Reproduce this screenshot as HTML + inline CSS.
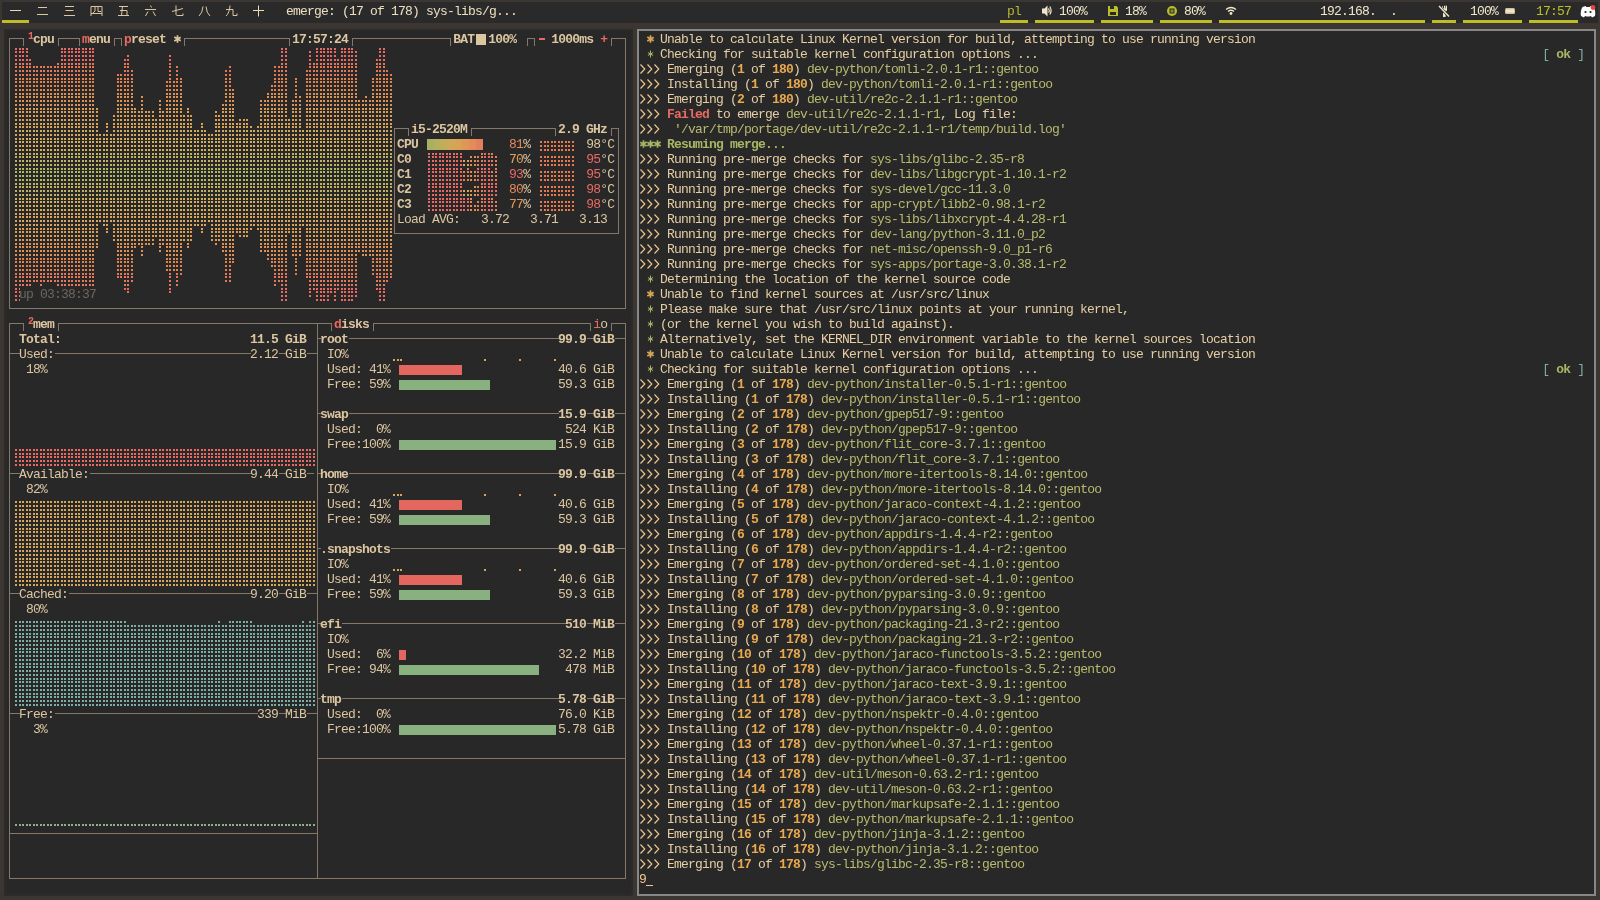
<!DOCTYPE html><html><head><meta charset="utf-8"><style>
html,body{margin:0;padding:0}body{width:1600px;height:900px;background:#3b3632;overflow:hidden;position:relative}
.t{position:absolute;font-family:"Liberation Mono",monospace;font-size:13px;line-height:15px;letter-spacing:-0.8px;white-space:pre;color:#dcc6a0}
#tx{position:absolute;left:0;top:0;width:1600px;height:900px;will-change:transform}.b{font-weight:bold}.w{position:absolute}svg{position:absolute;left:0;top:0}
.sup{font-size:10px;vertical-align:top}
</style></head><body>
<div class="w" style="left:4px;top:29px;width:625px;height:863px;border:2px solid #2d2b29;background:#282828"></div>
<div class="w" style="left:637px;top:29px;width:955px;height:863px;border:2px solid #878787;background:#282828"></div>
<svg width="1600" height="900" viewBox="0 0 1600 900"><defs><pattern id="pa" patternUnits="userSpaceOnUse" x="14" y="31" width="7" height="15"><path fill="#fff" d="M1 2h2v2h-2zM1 5h2v2h-2zM1 9h2v2h-2zM1 13h2v2h-2z"/></pattern><pattern id="pb" patternUnits="userSpaceOnUse" x="14" y="31" width="7" height="15"><path fill="#fff" d="M5 2h2v2h-2zM5 5h2v2h-2zM5 9h2v2h-2zM5 13h2v2h-2z"/></pattern><mask id="mcpu" maskUnits="userSpaceOnUse" x="0" y="0" width="1600" height="900"><rect x="15" y="48" width="2" height="253" fill="url(#pa)"/><rect x="19" y="48" width="2" height="253" fill="url(#pb)"/><rect x="22" y="48" width="2" height="253" fill="url(#pa)"/><rect x="26" y="48" width="2" height="253" fill="url(#pb)"/><rect x="29" y="59" width="2" height="242" fill="url(#pa)"/><rect x="33" y="66" width="2" height="216" fill="url(#pb)"/><rect x="36" y="66" width="2" height="216" fill="url(#pa)"/><rect x="40" y="66" width="2" height="235" fill="url(#pb)"/><rect x="43" y="66" width="2" height="216" fill="url(#pa)"/><rect x="47" y="66" width="2" height="216" fill="url(#pb)"/><rect x="50" y="66" width="2" height="216" fill="url(#pa)"/><rect x="54" y="66" width="2" height="216" fill="url(#pb)"/><rect x="57" y="63" width="2" height="238" fill="url(#pa)"/><rect x="61" y="48" width="2" height="253" fill="url(#pb)"/><rect x="64" y="48" width="2" height="253" fill="url(#pa)"/><rect x="68" y="48" width="2" height="253" fill="url(#pb)"/><rect x="71" y="48" width="2" height="253" fill="url(#pa)"/><rect x="75" y="48" width="2" height="253" fill="url(#pb)"/><rect x="78" y="48" width="2" height="253" fill="url(#pa)"/><rect x="82" y="48" width="2" height="253" fill="url(#pb)"/><rect x="85" y="48" width="2" height="253" fill="url(#pa)"/><rect x="89" y="48" width="2" height="253" fill="url(#pb)"/><rect x="92" y="48" width="2" height="253" fill="url(#pa)"/><rect x="96" y="108" width="2" height="140" fill="url(#pb)"/><rect x="99" y="134" width="2" height="88" fill="url(#pa)"/><rect x="103" y="134" width="2" height="92" fill="url(#pb)"/><rect x="106" y="123" width="2" height="110" fill="url(#pa)"/><rect x="110" y="134" width="2" height="88" fill="url(#pb)"/><rect x="113" y="115" width="2" height="126" fill="url(#pa)"/><rect x="117" y="74" width="2" height="204" fill="url(#pb)"/><rect x="120" y="74" width="2" height="204" fill="url(#pa)"/><rect x="124" y="59" width="2" height="231" fill="url(#pb)"/><rect x="127" y="55" width="2" height="238" fill="url(#pa)"/><rect x="131" y="70" width="2" height="212" fill="url(#pb)"/><rect x="134" y="108" width="2" height="140" fill="url(#pa)"/><rect x="138" y="111" width="2" height="134" fill="url(#pb)"/><rect x="141" y="96" width="2" height="160" fill="url(#pa)"/><rect x="145" y="111" width="2" height="134" fill="url(#pb)"/><rect x="148" y="111" width="2" height="134" fill="url(#pa)"/><rect x="152" y="111" width="2" height="134" fill="url(#pb)"/><rect x="155" y="119" width="2" height="118" fill="url(#pa)"/><rect x="159" y="100" width="2" height="152" fill="url(#pb)"/><rect x="162" y="111" width="2" height="134" fill="url(#pa)"/><rect x="166" y="81" width="2" height="190" fill="url(#pb)"/><rect x="169" y="55" width="2" height="238" fill="url(#pa)"/><rect x="173" y="81" width="2" height="190" fill="url(#pb)"/><rect x="176" y="66" width="2" height="220" fill="url(#pa)"/><rect x="180" y="78" width="2" height="197" fill="url(#pb)"/><rect x="183" y="115" width="2" height="126" fill="url(#pa)"/><rect x="187" y="108" width="2" height="140" fill="url(#pb)"/><rect x="190" y="115" width="2" height="126" fill="url(#pa)"/><rect x="194" y="130" width="2" height="96" fill="url(#pb)"/><rect x="197" y="130" width="2" height="96" fill="url(#pa)"/><rect x="201" y="123" width="2" height="110" fill="url(#pb)"/><rect x="204" y="130" width="2" height="96" fill="url(#pa)"/><rect x="208" y="134" width="2" height="88" fill="url(#pb)"/><rect x="211" y="134" width="2" height="107" fill="url(#pa)"/><rect x="215" y="111" width="2" height="134" fill="url(#pb)"/><rect x="218" y="115" width="2" height="126" fill="url(#pa)"/><rect x="222" y="104" width="2" height="148" fill="url(#pb)"/><rect x="225" y="70" width="2" height="212" fill="url(#pa)"/><rect x="229" y="66" width="2" height="216" fill="url(#pb)"/><rect x="232" y="89" width="2" height="174" fill="url(#pa)"/><rect x="236" y="123" width="2" height="110" fill="url(#pb)"/><rect x="239" y="119" width="2" height="118" fill="url(#pa)"/><rect x="243" y="119" width="2" height="118" fill="url(#pb)"/><rect x="246" y="119" width="2" height="118" fill="url(#pa)"/><rect x="250" y="126" width="2" height="104" fill="url(#pb)"/><rect x="253" y="130" width="2" height="96" fill="url(#pa)"/><rect x="257" y="126" width="2" height="104" fill="url(#pb)"/><rect x="260" y="100" width="2" height="152" fill="url(#pa)"/><rect x="264" y="100" width="2" height="152" fill="url(#pb)"/><rect x="267" y="93" width="2" height="167" fill="url(#pa)"/><rect x="271" y="85" width="2" height="182" fill="url(#pb)"/><rect x="274" y="66" width="2" height="220" fill="url(#pa)"/><rect x="278" y="66" width="2" height="216" fill="url(#pb)"/><rect x="281" y="48" width="2" height="253" fill="url(#pa)"/><rect x="285" y="48" width="2" height="253" fill="url(#pb)"/><rect x="288" y="119" width="2" height="114" fill="url(#pa)"/><rect x="292" y="100" width="2" height="156" fill="url(#pb)"/><rect x="295" y="78" width="2" height="197" fill="url(#pa)"/><rect x="299" y="96" width="2" height="160" fill="url(#pb)"/><rect x="302" y="130" width="2" height="96" fill="url(#pa)"/><rect x="306" y="70" width="2" height="208" fill="url(#pb)"/><rect x="309" y="51" width="2" height="246" fill="url(#pa)"/><rect x="313" y="63" width="2" height="227" fill="url(#pb)"/><rect x="316" y="48" width="2" height="253" fill="url(#pa)"/><rect x="320" y="48" width="2" height="253" fill="url(#pb)"/><rect x="323" y="48" width="2" height="253" fill="url(#pa)"/><rect x="327" y="48" width="2" height="253" fill="url(#pb)"/><rect x="330" y="48" width="2" height="245" fill="url(#pa)"/><rect x="334" y="48" width="2" height="253" fill="url(#pb)"/><rect x="337" y="59" width="2" height="231" fill="url(#pa)"/><rect x="341" y="48" width="2" height="253" fill="url(#pb)"/><rect x="344" y="48" width="2" height="253" fill="url(#pa)"/><rect x="348" y="48" width="2" height="253" fill="url(#pb)"/><rect x="351" y="48" width="2" height="253" fill="url(#pa)"/><rect x="355" y="51" width="2" height="246" fill="url(#pb)"/><rect x="358" y="100" width="2" height="152" fill="url(#pa)"/><rect x="362" y="100" width="2" height="156" fill="url(#pb)"/><rect x="365" y="96" width="2" height="160" fill="url(#pa)"/><rect x="369" y="100" width="2" height="156" fill="url(#pb)"/><rect x="372" y="78" width="2" height="197" fill="url(#pa)"/><rect x="376" y="59" width="2" height="231" fill="url(#pb)"/><rect x="379" y="48" width="2" height="253" fill="url(#pa)"/><rect x="383" y="48" width="2" height="253" fill="url(#pb)"/><rect x="386" y="70" width="2" height="212" fill="url(#pa)"/><rect x="390" y="74" width="2" height="204" fill="url(#pb)"/></mask><mask id="mdots" maskUnits="userSpaceOnUse" x="0" y="0" width="1600" height="900"><rect x="0" y="0" width="1600" height="900" fill="url(#pa)"/><rect x="0" y="0" width="1600" height="900" fill="url(#pb)"/></mask></defs><rect x="2" y="2" width="1596" height="21" fill="#2a2a2a"/><rect x="2" y="20" width="27" height="3" fill="#bdbd2c"/><rect x="1000" y="20" width="28" height="3" fill="#bdbd2c"/><rect x="1035" y="20" width="59" height="3" fill="#bdbd2c"/><rect x="1101" y="20" width="52" height="3" fill="#bdbd2c"/><rect x="1160" y="20" width="52" height="3" fill="#bdbd2c"/><rect x="1219" y="20" width="206" height="3" fill="#bdbd2c"/><rect x="1432" y="20" width="24" height="3" fill="#bdbd2c"/><rect x="1463" y="20" width="59" height="3" fill="#bdbd2c"/><rect x="1529" y="20" width="49" height="3" fill="#bdbd2c"/><path d="M10.0 10.5H21.0" stroke="#ebdbb2" stroke-width="1" fill="none"/><path d="M38.0 7.5H47.0 M37.0 14.5H48.0" stroke="#dcc6a0" stroke-width="1" fill="none"/><path d="M65.0 6.5H74.0 M65.5 10.5H73.5 M64.0 15.5H75.0" stroke="#dcc6a0" stroke-width="1" fill="none"/><path d="M91.0 16V6.5H102.0V16 M91.0 13.5H102.0 M95.0 6.5V11 L93.0 13 M98.0 6.5V11.5H101.0" stroke="#dcc6a0" stroke-width="1" fill="none"/><path d="M119.0 6.5H128.0 M122.5 6.5L121.5 15.5 M120.0 10.5H127.0V15.5 M118.0 15.5H129.0" stroke="#dcc6a0" stroke-width="1" fill="none"/><path d="M150.5 5.5L151.5 7.5 M145.0 9.5H156.0 M148.0 11.5L145.5 16 M153.0 11.5L155.5 16" stroke="#dcc6a0" stroke-width="1" fill="none"/><path d="M172.0 11.5L183.0 8.5 M176.0 5.5V14.5Q176.0 15.5 178.0 15.5H183.0V13.5" stroke="#dcc6a0" stroke-width="1" fill="none"/><path d="M203.0 6.5Q202.5 13 199.0 16 M206.0 6.5Q206.5 13 210.0 16" stroke="#dcc6a0" stroke-width="1" fill="none"/><path d="M226.0 9.5H233.0V15.5H237.0V13.5 M230.0 5.5Q229.5 13 226.0 16" stroke="#dcc6a0" stroke-width="1" fill="none"/><path d="M253.0 10.5H264.0 M258.5 5.5V16.5" stroke="#ebdbb2" stroke-width="1" fill="none"/><path d="M1042 8.5h2.5l3-3v11l-3-3H1042z" fill="#f0e6ca"/><path d="M1048.6 8.2q1.2 2.3 0 4.6M1049.8 6.5q2.6 4 0 8" stroke="#f0e6ca" stroke-width="1.2" fill="none"/><path d="M1108 6h8.5l1.5 1.5V16h-10z" fill="#bdbd2c"/><rect x="1110" y="6" width="4" height="3" fill="#2a2a2a"/><rect x="1110" y="12" width="6" height="3" fill="#2a2a2a"/><circle cx="1172" cy="11" r="5" fill="#bdbd2c"/><rect x="1169.5" y="8.5" width="5" height="5" fill="#2a2a2a"/><rect x="1170.5" y="9.5" width="3" height="3" fill="#8a8a30"/><path d="M1226 9.5q5-4 10 0M1228 11.5q3-2.5 6 0" stroke="#f0e6ca" stroke-width="1.3" fill="none"/><circle cx="1231" cy="13.5" r="1.4" fill="#f0e6ca"/><g fill="#f0e6ca"><rect x="1442" y="6" width="1" height="2.5" opacity="0.7"/><rect x="1444" y="5.7" width="1.4" height="3"/><rect x="1446" y="5.7" width="1" height="5"/><rect x="1441.5" y="8.3" width="5.5" height="2.4"/><rect x="1443" y="10.6" width="2.6" height="6.4"/></g><path d="M1438.5 5.8L1449.5 17" stroke="#2a2a2a" stroke-width="2.6"/><path d="M1439 6L1449 16.5" stroke="#f0e6ca" stroke-width="1.4"/><rect x="1505" y="8" width="10" height="6" rx="1.5" fill="#cfc2a0"/><rect x="1506" y="9.5" width="8" height="3" fill="#f0e6c8"/><path d="M1581 16q-1-5 1.5-9l3-1 .8 1h3.4l.8-1 3 1q2.5 4 1.5 9l-3 1.5-1-1.5q-2.5 1-6 0l-1 1.5z" fill="#fff"/><circle cx="1585.5" cy="12" r="1.1" fill="#222"/><circle cx="1590.5" cy="12" r="1.1" fill="#222"/><circle cx="1593" cy="7.5" r="2.4" fill="#e8413e"/><g mask="url(#mcpu)"><rect x="13" y="46" width="380" height="15" fill="#ea6962"/><rect x="13" y="61" width="380" height="15" fill="#e67658"/><rect x="13" y="76" width="380" height="15" fill="#e2834f"/><rect x="13" y="91" width="380" height="15" fill="#df9052"/><rect x="13" y="106" width="380" height="15" fill="#dc9e55"/><rect x="13" y="121" width="380" height="15" fill="#d8a658"/><rect x="13" y="136" width="380" height="15" fill="#d4ae5a"/><rect x="13" y="151" width="380" height="15" fill="#c4b35e"/><rect x="13" y="166" width="380" height="15" fill="#b4b862"/><rect x="13" y="181" width="380" height="15" fill="#c4b35e"/><rect x="13" y="196" width="380" height="15" fill="#d4ae5a"/><rect x="13" y="211" width="380" height="15" fill="#d8a658"/><rect x="13" y="226" width="380" height="15" fill="#dc9e55"/><rect x="13" y="241" width="380" height="15" fill="#df9052"/><rect x="13" y="256" width="380" height="15" fill="#e2834f"/><rect x="13" y="271" width="380" height="15" fill="#e67658"/><rect x="13" y="286" width="380" height="15" fill="#ea6962"/></g><rect x="20" y="286" width="77" height="15" fill="#282828"/><g mask="url(#mdots)"><rect x="15" y="449" width="300" height="17" fill="#ea6962"/><rect x="15" y="501" width="300" height="85" fill="#d8a657"/><rect x="15" y="625" width="300" height="81" fill="#7daea3"/><rect x="15" y="621" width="111" height="3" fill="#7daea3"/><rect x="218" y="621" width="2" height="3" fill="#7daea3"/><rect x="229" y="621" width="23" height="3" fill="#7daea3"/><rect x="302" y="621" width="2" height="3" fill="#7daea3"/><rect x="309" y="621" width="6" height="3" fill="#7daea3"/><rect x="15" y="824" width="300" height="2" fill="#89b482"/><rect x="393" y="359" width="2" height="2" fill="#d8a657"/><rect x="397" y="359" width="2" height="2" fill="#d8a657"/><rect x="400" y="359" width="2" height="2" fill="#d8a657"/><rect x="484" y="359" width="2" height="2" fill="#d8a657"/><rect x="519" y="359" width="2" height="2" fill="#d8a657"/><rect x="554" y="359" width="2" height="2" fill="#d8a657"/><rect x="393" y="494" width="2" height="2" fill="#d8a657"/><rect x="397" y="494" width="2" height="2" fill="#d8a657"/><rect x="400" y="494" width="2" height="2" fill="#d8a657"/><rect x="484" y="494" width="2" height="2" fill="#d8a657"/><rect x="519" y="494" width="2" height="2" fill="#d8a657"/><rect x="554" y="494" width="2" height="2" fill="#d8a657"/><rect x="393" y="569" width="2" height="2" fill="#d8a657"/><rect x="397" y="569" width="2" height="2" fill="#d8a657"/><rect x="400" y="569" width="2" height="2" fill="#d8a657"/><rect x="484" y="569" width="2" height="2" fill="#d8a657"/><rect x="519" y="569" width="2" height="2" fill="#d8a657"/><rect x="554" y="569" width="2" height="2" fill="#d8a657"/><rect x="428" y="153" width="2" height="13" fill="#ea6962"/><rect x="432" y="153" width="2" height="13" fill="#ea6962"/><rect x="435" y="153" width="2" height="13" fill="#ea6962"/><rect x="439" y="153" width="2" height="13" fill="#ea6962"/><rect x="442" y="153" width="2" height="13" fill="#ea6962"/><rect x="446" y="153" width="2" height="13" fill="#ea6962"/><rect x="449" y="153" width="2" height="13" fill="#ea6962"/><rect x="453" y="153" width="2" height="13" fill="#ea6962"/><rect x="456" y="153" width="2" height="13" fill="#ea6962"/><rect x="460" y="153" width="2" height="13" fill="#ea6962"/><rect x="463" y="160" width="2" height="6" fill="#d8a657"/><rect x="467" y="160" width="2" height="6" fill="#d8a657"/><rect x="470" y="156" width="2" height="10" fill="#e38c50"/><rect x="474" y="156" width="2" height="10" fill="#e38c50"/><rect x="477" y="156" width="2" height="10" fill="#e67c56"/><rect x="481" y="153" width="2" height="13" fill="#e67c56"/><rect x="484" y="153" width="2" height="13" fill="#ea6962"/><rect x="488" y="153" width="2" height="13" fill="#ea6962"/><rect x="491" y="153" width="2" height="13" fill="#e67c56"/><rect x="495" y="156" width="2" height="10" fill="#e67c56"/><rect x="428" y="168" width="2" height="13" fill="#ea6962"/><rect x="432" y="168" width="2" height="13" fill="#ea6962"/><rect x="435" y="168" width="2" height="13" fill="#ea6962"/><rect x="439" y="168" width="2" height="13" fill="#ea6962"/><rect x="442" y="168" width="2" height="13" fill="#ea6962"/><rect x="446" y="168" width="2" height="13" fill="#ea6962"/><rect x="449" y="168" width="2" height="13" fill="#ea6962"/><rect x="453" y="168" width="2" height="13" fill="#ea6962"/><rect x="456" y="168" width="2" height="13" fill="#ea6962"/><rect x="460" y="168" width="2" height="13" fill="#ea6962"/><rect x="463" y="171" width="2" height="10" fill="#e67c56"/><rect x="467" y="168" width="2" height="13" fill="#e67c56"/><rect x="470" y="171" width="2" height="10" fill="#e38c50"/><rect x="474" y="171" width="2" height="10" fill="#e38c50"/><rect x="477" y="168" width="2" height="13" fill="#ea6962"/><rect x="481" y="168" width="2" height="13" fill="#ea6962"/><rect x="484" y="168" width="2" height="13" fill="#ea6962"/><rect x="488" y="168" width="2" height="13" fill="#ea6962"/><rect x="491" y="171" width="2" height="10" fill="#e67c56"/><rect x="495" y="168" width="2" height="13" fill="#e67c56"/><rect x="428" y="183" width="2" height="13" fill="#ea6962"/><rect x="432" y="183" width="2" height="13" fill="#ea6962"/><rect x="435" y="183" width="2" height="13" fill="#ea6962"/><rect x="439" y="183" width="2" height="13" fill="#ea6962"/><rect x="442" y="183" width="2" height="13" fill="#ea6962"/><rect x="446" y="183" width="2" height="13" fill="#ea6962"/><rect x="449" y="183" width="2" height="13" fill="#ea6962"/><rect x="453" y="183" width="2" height="13" fill="#ea6962"/><rect x="456" y="183" width="2" height="13" fill="#ea6962"/><rect x="460" y="183" width="2" height="13" fill="#ea6962"/><rect x="463" y="190" width="2" height="6" fill="#d8a657"/><rect x="467" y="190" width="2" height="6" fill="#d8a657"/><rect x="470" y="190" width="2" height="6" fill="#de9954"/><rect x="474" y="186" width="2" height="10" fill="#de9954"/><rect x="477" y="186" width="2" height="10" fill="#e67c56"/><rect x="481" y="183" width="2" height="13" fill="#e67c56"/><rect x="484" y="183" width="2" height="13" fill="#ea6962"/><rect x="488" y="183" width="2" height="13" fill="#ea6962"/><rect x="491" y="183" width="2" height="13" fill="#ea6962"/><rect x="495" y="183" width="2" height="13" fill="#ea6962"/><rect x="428" y="198" width="2" height="13" fill="#ea6962"/><rect x="432" y="198" width="2" height="13" fill="#ea6962"/><rect x="435" y="198" width="2" height="13" fill="#ea6962"/><rect x="439" y="198" width="2" height="13" fill="#ea6962"/><rect x="442" y="198" width="2" height="13" fill="#ea6962"/><rect x="446" y="198" width="2" height="13" fill="#ea6962"/><rect x="449" y="198" width="2" height="13" fill="#ea6962"/><rect x="453" y="198" width="2" height="13" fill="#ea6962"/><rect x="456" y="198" width="2" height="13" fill="#ea6962"/><rect x="460" y="198" width="2" height="13" fill="#ea6962"/><rect x="463" y="198" width="2" height="13" fill="#ea6962"/><rect x="467" y="198" width="2" height="13" fill="#ea6962"/><rect x="470" y="198" width="2" height="13" fill="#e38c50"/><rect x="474" y="205" width="2" height="6" fill="#e38c50"/><rect x="477" y="201" width="2" height="10" fill="#e67c56"/><rect x="481" y="198" width="2" height="13" fill="#e67c56"/><rect x="484" y="198" width="2" height="13" fill="#ea6962"/><rect x="488" y="198" width="2" height="13" fill="#ea6962"/><rect x="491" y="198" width="2" height="13" fill="#e67c56"/><rect x="495" y="201" width="2" height="10" fill="#e67c56"/><rect x="540" y="141" width="34" height="10" fill="#e8784e"/><rect x="540" y="156" width="34" height="10" fill="#e8784e"/><rect x="540" y="171" width="34" height="10" fill="#e8784e"/><rect x="540" y="186" width="34" height="10" fill="#e8784e"/><rect x="540" y="201" width="34" height="10" fill="#e8784e"/></g><rect x="427" y="139" width="7" height="11" fill="#a9b060"/><rect x="434" y="139" width="7" height="11" fill="#b6b05e"/><rect x="441" y="139" width="7" height="11" fill="#c3ad5b"/><rect x="448" y="139" width="7" height="11" fill="#d0a858"/><rect x="455" y="139" width="7" height="11" fill="#d9a156"/><rect x="462" y="139" width="7" height="11" fill="#e09657"/><rect x="469" y="139" width="7" height="11" fill="#e38b59"/><rect x="476" y="139" width="7" height="11" fill="#e2805b"/><rect x="399" y="365" width="63" height="10" fill="#e4675f"/><rect x="399" y="380" width="91" height="10" fill="#89b07f"/><rect x="399" y="440" width="157" height="10" fill="#89b07f"/><rect x="399" y="500" width="63" height="10" fill="#e4675f"/><rect x="399" y="515" width="91" height="10" fill="#89b07f"/><rect x="399" y="575" width="63" height="10" fill="#e4675f"/><rect x="399" y="590" width="91" height="10" fill="#89b07f"/><rect x="399" y="650" width="7" height="10" fill="#e4675f"/><rect x="399" y="665" width="140" height="10" fill="#89b07f"/><rect x="399" y="725" width="157" height="10" fill="#89b07f"/><rect x="476" y="34" width="10" height="11" fill="#dcc6a0"/><rect x="539" y="38" width="6" height="2" fill="#ea6962"/><path fill="#857868" d="M9 38h15v1h-15zM58 38h22v1h-22zM114 38h8v1h-8zM184 38h106v1h-106zM352 38h99v1h-99zM527 38h8v1h-8zM611 38h15v1h-15zM9 38h1v8h-1zM23 38h1v8h-1zM58 38h1v8h-1zM79 38h1v8h-1zM114 38h1v8h-1zM121 38h1v8h-1zM184 38h1v8h-1zM289 38h1v8h-1zM352 38h1v8h-1zM450 38h1v8h-1zM527 38h1v8h-1zM534 38h1v8h-1zM611 38h1v8h-1zM625 38h1v8h-1zM9 46h1v15h-1zM625 46h1v15h-1zM9 61h1v15h-1zM625 61h1v15h-1zM9 76h1v15h-1zM625 76h1v15h-1zM9 91h1v15h-1zM625 91h1v15h-1zM9 106h1v15h-1zM625 106h1v15h-1zM9 121h1v15h-1zM625 121h1v15h-1zM394 128h15v1h-15zM471 128h85v1h-85zM611 128h8v1h-8zM394 128h1v8h-1zM408 128h1v8h-1zM471 128h1v8h-1zM555 128h1v8h-1zM611 128h1v8h-1zM618 128h1v8h-1zM9 136h1v15h-1zM394 136h1v15h-1zM618 136h1v15h-1zM625 136h1v15h-1zM9 151h1v15h-1zM394 151h1v15h-1zM618 151h1v15h-1zM625 151h1v15h-1zM9 166h1v15h-1zM394 166h1v15h-1zM618 166h1v15h-1zM625 166h1v15h-1zM9 181h1v15h-1zM394 181h1v15h-1zM618 181h1v15h-1zM625 181h1v15h-1zM9 196h1v15h-1zM394 196h1v15h-1zM618 196h1v15h-1zM625 196h1v15h-1zM9 211h1v15h-1zM394 211h1v15h-1zM618 211h1v15h-1zM625 211h1v15h-1zM394 226h1v8h-1zM618 226h1v8h-1zM9 226h1v15h-1zM625 226h1v15h-1zM394 233h225v1h-225zM9 241h1v15h-1zM625 241h1v15h-1zM9 256h1v15h-1zM625 256h1v15h-1zM9 271h1v15h-1zM625 271h1v15h-1zM9 286h1v15h-1zM625 286h1v15h-1zM9 301h1v8h-1zM625 301h1v8h-1zM9 308h617v1h-617zM9 323h15v1h-15zM58 323h274v1h-274zM373 323h218v1h-218zM611 323h15v1h-15zM9 323h1v8h-1zM23 323h1v8h-1zM58 323h1v8h-1zM317 323h1v8h-1zM331 323h1v8h-1zM373 323h1v8h-1zM590 323h1v8h-1zM611 323h1v8h-1zM625 323h1v8h-1zM9 331h1v15h-1zM317 331h1v15h-1zM625 331h1v15h-1zM317 338h4v1h-4zM349 338h210v1h-210zM587 338h7v1h-7zM615 338h11v1h-11zM9 346h1v15h-1zM317 346h1v15h-1zM625 346h1v15h-1zM9 353h11v1h-11zM55 353h196v1h-196zM279 353h7v1h-7zM307 353h11v1h-11zM9 361h1v15h-1zM317 361h1v15h-1zM625 361h1v15h-1zM9 376h1v15h-1zM317 376h1v15h-1zM625 376h1v15h-1zM9 391h1v15h-1zM317 391h1v15h-1zM625 391h1v15h-1zM9 406h1v15h-1zM317 406h1v15h-1zM625 406h1v15h-1zM317 413h4v1h-4zM349 413h210v1h-210zM587 413h7v1h-7zM615 413h11v1h-11zM9 421h1v15h-1zM317 421h1v15h-1zM625 421h1v15h-1zM9 436h1v15h-1zM317 436h1v15h-1zM625 436h1v15h-1zM9 451h1v15h-1zM317 451h1v15h-1zM625 451h1v15h-1zM9 466h1v15h-1zM317 466h1v15h-1zM625 466h1v15h-1zM9 473h11v1h-11zM90 473h161v1h-161zM279 473h7v1h-7zM307 473h7v1h-7zM317 473h4v1h-4zM349 473h210v1h-210zM587 473h7v1h-7zM615 473h11v1h-11zM9 481h1v15h-1zM317 481h1v15h-1zM625 481h1v15h-1zM9 496h1v15h-1zM317 496h1v15h-1zM625 496h1v15h-1zM9 511h1v15h-1zM317 511h1v15h-1zM625 511h1v15h-1zM9 526h1v15h-1zM317 526h1v15h-1zM625 526h1v15h-1zM9 541h1v15h-1zM317 541h1v15h-1zM625 541h1v15h-1zM317 548h4v1h-4zM391 548h168v1h-168zM587 548h7v1h-7zM615 548h11v1h-11zM9 556h1v15h-1zM317 556h1v15h-1zM625 556h1v15h-1zM9 571h1v15h-1zM317 571h1v15h-1zM625 571h1v15h-1zM9 586h1v15h-1zM317 586h1v15h-1zM625 586h1v15h-1zM9 593h11v1h-11zM69 593h182v1h-182zM279 593h7v1h-7zM307 593h11v1h-11zM9 601h1v15h-1zM317 601h1v15h-1zM625 601h1v15h-1zM9 616h1v15h-1zM317 616h1v15h-1zM625 616h1v15h-1zM317 623h4v1h-4zM342 623h224v1h-224zM587 623h7v1h-7zM615 623h11v1h-11zM9 631h1v15h-1zM317 631h1v15h-1zM625 631h1v15h-1zM9 646h1v15h-1zM317 646h1v15h-1zM625 646h1v15h-1zM9 661h1v15h-1zM317 661h1v15h-1zM625 661h1v15h-1zM9 676h1v15h-1zM317 676h1v15h-1zM625 676h1v15h-1zM9 691h1v15h-1zM317 691h1v15h-1zM625 691h1v15h-1zM317 698h4v1h-4zM342 698h217v1h-217zM587 698h7v1h-7zM615 698h11v1h-11zM9 706h1v15h-1zM317 706h1v15h-1zM625 706h1v15h-1zM9 713h11v1h-11zM55 713h203v1h-203zM279 713h7v1h-7zM307 713h11v1h-11zM9 721h1v15h-1zM317 721h1v15h-1zM625 721h1v15h-1zM9 736h1v15h-1zM317 736h1v15h-1zM625 736h1v15h-1zM9 751h1v15h-1zM317 751h1v15h-1zM625 751h1v15h-1zM317 758h309v1h-309zM9 766h1v15h-1zM317 766h1v15h-1zM625 766h1v15h-1zM9 781h1v15h-1zM317 781h1v15h-1zM625 781h1v15h-1zM9 796h1v15h-1zM317 796h1v15h-1zM625 796h1v15h-1zM9 811h1v15h-1zM317 811h1v15h-1zM625 811h1v15h-1zM9 826h1v15h-1zM317 826h1v15h-1zM625 826h1v15h-1zM9 833h309v1h-309zM9 841h1v15h-1zM317 841h1v15h-1zM625 841h1v15h-1zM9 856h1v15h-1zM317 856h1v15h-1zM625 856h1v15h-1zM9 871h1v8h-1zM317 871h1v8h-1zM625 871h1v8h-1zM9 878h617v1h-617z"/><path d="M177.5 35.2v7.6M174.3 37.1l6.4 3.7M174.3 40.9l6.4 -3.7" stroke="#dcc6a0" stroke-width="1.7" fill="none"/><path d="M650.5 35.2v7.6M647.3 37.1l6.4 3.7M647.3 40.9l6.4 -3.7" stroke="#d8a657" stroke-width="1.7" fill="none"/><path d="M650.5 50.5v7M647.9 52.5l5.2 3M647.9 55.5l5.2 -3" stroke="#a9b665" stroke-width="1" fill="none"/><rect x="649.5" y="53.0" width="2" height="2" fill="#a9b665"/><path d="M640.5 64.5l4.3 4.5l-4.3 4.5" stroke="#f0c88f" stroke-width="1.15" fill="none"/><path d="M647.5 64.5l4.3 4.5l-4.3 4.5" stroke="#f0c88f" stroke-width="1.15" fill="none"/><path d="M654.5 64.5l4.3 4.5l-4.3 4.5" stroke="#f0c88f" stroke-width="1.15" fill="none"/><path d="M640.5 79.5l4.3 4.5l-4.3 4.5" stroke="#f0c88f" stroke-width="1.15" fill="none"/><path d="M647.5 79.5l4.3 4.5l-4.3 4.5" stroke="#f0c88f" stroke-width="1.15" fill="none"/><path d="M654.5 79.5l4.3 4.5l-4.3 4.5" stroke="#f0c88f" stroke-width="1.15" fill="none"/><path d="M640.5 94.5l4.3 4.5l-4.3 4.5" stroke="#f0c88f" stroke-width="1.15" fill="none"/><path d="M647.5 94.5l4.3 4.5l-4.3 4.5" stroke="#f0c88f" stroke-width="1.15" fill="none"/><path d="M654.5 94.5l4.3 4.5l-4.3 4.5" stroke="#f0c88f" stroke-width="1.15" fill="none"/><path d="M640.5 109.5l4.3 4.5l-4.3 4.5" stroke="#f0c88f" stroke-width="1.15" fill="none"/><path d="M647.5 109.5l4.3 4.5l-4.3 4.5" stroke="#f0c88f" stroke-width="1.15" fill="none"/><path d="M654.5 109.5l4.3 4.5l-4.3 4.5" stroke="#f0c88f" stroke-width="1.15" fill="none"/><path d="M640.5 124.5l4.3 4.5l-4.3 4.5" stroke="#f0c88f" stroke-width="1.15" fill="none"/><path d="M647.5 124.5l4.3 4.5l-4.3 4.5" stroke="#f0c88f" stroke-width="1.15" fill="none"/><path d="M654.5 124.5l4.3 4.5l-4.3 4.5" stroke="#f0c88f" stroke-width="1.15" fill="none"/><path d="M643.5 140.2v7.6M640.3 142.2l6.4 3.7M640.3 145.8l6.4 -3.7" stroke="#a9b665" stroke-width="1.7" fill="none"/><path d="M650.5 140.2v7.6M647.3 142.2l6.4 3.7M647.3 145.8l6.4 -3.7" stroke="#a9b665" stroke-width="1.7" fill="none"/><path d="M657.5 140.2v7.6M654.3 142.2l6.4 3.7M654.3 145.8l6.4 -3.7" stroke="#a9b665" stroke-width="1.7" fill="none"/><path d="M640.5 154.5l4.3 4.5l-4.3 4.5" stroke="#f0c88f" stroke-width="1.15" fill="none"/><path d="M647.5 154.5l4.3 4.5l-4.3 4.5" stroke="#f0c88f" stroke-width="1.15" fill="none"/><path d="M654.5 154.5l4.3 4.5l-4.3 4.5" stroke="#f0c88f" stroke-width="1.15" fill="none"/><path d="M640.5 169.5l4.3 4.5l-4.3 4.5" stroke="#f0c88f" stroke-width="1.15" fill="none"/><path d="M647.5 169.5l4.3 4.5l-4.3 4.5" stroke="#f0c88f" stroke-width="1.15" fill="none"/><path d="M654.5 169.5l4.3 4.5l-4.3 4.5" stroke="#f0c88f" stroke-width="1.15" fill="none"/><path d="M640.5 184.5l4.3 4.5l-4.3 4.5" stroke="#f0c88f" stroke-width="1.15" fill="none"/><path d="M647.5 184.5l4.3 4.5l-4.3 4.5" stroke="#f0c88f" stroke-width="1.15" fill="none"/><path d="M654.5 184.5l4.3 4.5l-4.3 4.5" stroke="#f0c88f" stroke-width="1.15" fill="none"/><path d="M640.5 199.5l4.3 4.5l-4.3 4.5" stroke="#f0c88f" stroke-width="1.15" fill="none"/><path d="M647.5 199.5l4.3 4.5l-4.3 4.5" stroke="#f0c88f" stroke-width="1.15" fill="none"/><path d="M654.5 199.5l4.3 4.5l-4.3 4.5" stroke="#f0c88f" stroke-width="1.15" fill="none"/><path d="M640.5 214.5l4.3 4.5l-4.3 4.5" stroke="#f0c88f" stroke-width="1.15" fill="none"/><path d="M647.5 214.5l4.3 4.5l-4.3 4.5" stroke="#f0c88f" stroke-width="1.15" fill="none"/><path d="M654.5 214.5l4.3 4.5l-4.3 4.5" stroke="#f0c88f" stroke-width="1.15" fill="none"/><path d="M640.5 229.5l4.3 4.5l-4.3 4.5" stroke="#f0c88f" stroke-width="1.15" fill="none"/><path d="M647.5 229.5l4.3 4.5l-4.3 4.5" stroke="#f0c88f" stroke-width="1.15" fill="none"/><path d="M654.5 229.5l4.3 4.5l-4.3 4.5" stroke="#f0c88f" stroke-width="1.15" fill="none"/><path d="M640.5 244.5l4.3 4.5l-4.3 4.5" stroke="#f0c88f" stroke-width="1.15" fill="none"/><path d="M647.5 244.5l4.3 4.5l-4.3 4.5" stroke="#f0c88f" stroke-width="1.15" fill="none"/><path d="M654.5 244.5l4.3 4.5l-4.3 4.5" stroke="#f0c88f" stroke-width="1.15" fill="none"/><path d="M640.5 259.5l4.3 4.5l-4.3 4.5" stroke="#f0c88f" stroke-width="1.15" fill="none"/><path d="M647.5 259.5l4.3 4.5l-4.3 4.5" stroke="#f0c88f" stroke-width="1.15" fill="none"/><path d="M654.5 259.5l4.3 4.5l-4.3 4.5" stroke="#f0c88f" stroke-width="1.15" fill="none"/><path d="M650.5 275.5v7M647.9 277.5l5.2 3M647.9 280.5l5.2 -3" stroke="#a9b665" stroke-width="1" fill="none"/><rect x="649.5" y="278.0" width="2" height="2" fill="#a9b665"/><path d="M650.5 290.2v7.6M647.3 292.1l6.4 3.7M647.3 295.9l6.4 -3.7" stroke="#d8a657" stroke-width="1.7" fill="none"/><path d="M650.5 305.5v7M647.9 307.5l5.2 3M647.9 310.5l5.2 -3" stroke="#a9b665" stroke-width="1" fill="none"/><rect x="649.5" y="308.0" width="2" height="2" fill="#a9b665"/><path d="M650.5 320.5v7M647.9 322.5l5.2 3M647.9 325.5l5.2 -3" stroke="#a9b665" stroke-width="1" fill="none"/><rect x="649.5" y="323.0" width="2" height="2" fill="#a9b665"/><path d="M650.5 335.5v7M647.9 337.5l5.2 3M647.9 340.5l5.2 -3" stroke="#a9b665" stroke-width="1" fill="none"/><rect x="649.5" y="338.0" width="2" height="2" fill="#a9b665"/><path d="M650.5 350.2v7.6M647.3 352.1l6.4 3.7M647.3 355.9l6.4 -3.7" stroke="#d8a657" stroke-width="1.7" fill="none"/><path d="M650.5 365.5v7M647.9 367.5l5.2 3M647.9 370.5l5.2 -3" stroke="#a9b665" stroke-width="1" fill="none"/><rect x="649.5" y="368.0" width="2" height="2" fill="#a9b665"/><path d="M640.5 379.5l4.3 4.5l-4.3 4.5" stroke="#f0c88f" stroke-width="1.15" fill="none"/><path d="M647.5 379.5l4.3 4.5l-4.3 4.5" stroke="#f0c88f" stroke-width="1.15" fill="none"/><path d="M654.5 379.5l4.3 4.5l-4.3 4.5" stroke="#f0c88f" stroke-width="1.15" fill="none"/><path d="M640.5 394.5l4.3 4.5l-4.3 4.5" stroke="#f0c88f" stroke-width="1.15" fill="none"/><path d="M647.5 394.5l4.3 4.5l-4.3 4.5" stroke="#f0c88f" stroke-width="1.15" fill="none"/><path d="M654.5 394.5l4.3 4.5l-4.3 4.5" stroke="#f0c88f" stroke-width="1.15" fill="none"/><path d="M640.5 409.5l4.3 4.5l-4.3 4.5" stroke="#f0c88f" stroke-width="1.15" fill="none"/><path d="M647.5 409.5l4.3 4.5l-4.3 4.5" stroke="#f0c88f" stroke-width="1.15" fill="none"/><path d="M654.5 409.5l4.3 4.5l-4.3 4.5" stroke="#f0c88f" stroke-width="1.15" fill="none"/><path d="M640.5 424.5l4.3 4.5l-4.3 4.5" stroke="#f0c88f" stroke-width="1.15" fill="none"/><path d="M647.5 424.5l4.3 4.5l-4.3 4.5" stroke="#f0c88f" stroke-width="1.15" fill="none"/><path d="M654.5 424.5l4.3 4.5l-4.3 4.5" stroke="#f0c88f" stroke-width="1.15" fill="none"/><path d="M640.5 439.5l4.3 4.5l-4.3 4.5" stroke="#f0c88f" stroke-width="1.15" fill="none"/><path d="M647.5 439.5l4.3 4.5l-4.3 4.5" stroke="#f0c88f" stroke-width="1.15" fill="none"/><path d="M654.5 439.5l4.3 4.5l-4.3 4.5" stroke="#f0c88f" stroke-width="1.15" fill="none"/><path d="M640.5 454.5l4.3 4.5l-4.3 4.5" stroke="#f0c88f" stroke-width="1.15" fill="none"/><path d="M647.5 454.5l4.3 4.5l-4.3 4.5" stroke="#f0c88f" stroke-width="1.15" fill="none"/><path d="M654.5 454.5l4.3 4.5l-4.3 4.5" stroke="#f0c88f" stroke-width="1.15" fill="none"/><path d="M640.5 469.5l4.3 4.5l-4.3 4.5" stroke="#f0c88f" stroke-width="1.15" fill="none"/><path d="M647.5 469.5l4.3 4.5l-4.3 4.5" stroke="#f0c88f" stroke-width="1.15" fill="none"/><path d="M654.5 469.5l4.3 4.5l-4.3 4.5" stroke="#f0c88f" stroke-width="1.15" fill="none"/><path d="M640.5 484.5l4.3 4.5l-4.3 4.5" stroke="#f0c88f" stroke-width="1.15" fill="none"/><path d="M647.5 484.5l4.3 4.5l-4.3 4.5" stroke="#f0c88f" stroke-width="1.15" fill="none"/><path d="M654.5 484.5l4.3 4.5l-4.3 4.5" stroke="#f0c88f" stroke-width="1.15" fill="none"/><path d="M640.5 499.5l4.3 4.5l-4.3 4.5" stroke="#f0c88f" stroke-width="1.15" fill="none"/><path d="M647.5 499.5l4.3 4.5l-4.3 4.5" stroke="#f0c88f" stroke-width="1.15" fill="none"/><path d="M654.5 499.5l4.3 4.5l-4.3 4.5" stroke="#f0c88f" stroke-width="1.15" fill="none"/><path d="M640.5 514.5l4.3 4.5l-4.3 4.5" stroke="#f0c88f" stroke-width="1.15" fill="none"/><path d="M647.5 514.5l4.3 4.5l-4.3 4.5" stroke="#f0c88f" stroke-width="1.15" fill="none"/><path d="M654.5 514.5l4.3 4.5l-4.3 4.5" stroke="#f0c88f" stroke-width="1.15" fill="none"/><path d="M640.5 529.5l4.3 4.5l-4.3 4.5" stroke="#f0c88f" stroke-width="1.15" fill="none"/><path d="M647.5 529.5l4.3 4.5l-4.3 4.5" stroke="#f0c88f" stroke-width="1.15" fill="none"/><path d="M654.5 529.5l4.3 4.5l-4.3 4.5" stroke="#f0c88f" stroke-width="1.15" fill="none"/><path d="M640.5 544.5l4.3 4.5l-4.3 4.5" stroke="#f0c88f" stroke-width="1.15" fill="none"/><path d="M647.5 544.5l4.3 4.5l-4.3 4.5" stroke="#f0c88f" stroke-width="1.15" fill="none"/><path d="M654.5 544.5l4.3 4.5l-4.3 4.5" stroke="#f0c88f" stroke-width="1.15" fill="none"/><path d="M640.5 559.5l4.3 4.5l-4.3 4.5" stroke="#f0c88f" stroke-width="1.15" fill="none"/><path d="M647.5 559.5l4.3 4.5l-4.3 4.5" stroke="#f0c88f" stroke-width="1.15" fill="none"/><path d="M654.5 559.5l4.3 4.5l-4.3 4.5" stroke="#f0c88f" stroke-width="1.15" fill="none"/><path d="M640.5 574.5l4.3 4.5l-4.3 4.5" stroke="#f0c88f" stroke-width="1.15" fill="none"/><path d="M647.5 574.5l4.3 4.5l-4.3 4.5" stroke="#f0c88f" stroke-width="1.15" fill="none"/><path d="M654.5 574.5l4.3 4.5l-4.3 4.5" stroke="#f0c88f" stroke-width="1.15" fill="none"/><path d="M640.5 589.5l4.3 4.5l-4.3 4.5" stroke="#f0c88f" stroke-width="1.15" fill="none"/><path d="M647.5 589.5l4.3 4.5l-4.3 4.5" stroke="#f0c88f" stroke-width="1.15" fill="none"/><path d="M654.5 589.5l4.3 4.5l-4.3 4.5" stroke="#f0c88f" stroke-width="1.15" fill="none"/><path d="M640.5 604.5l4.3 4.5l-4.3 4.5" stroke="#f0c88f" stroke-width="1.15" fill="none"/><path d="M647.5 604.5l4.3 4.5l-4.3 4.5" stroke="#f0c88f" stroke-width="1.15" fill="none"/><path d="M654.5 604.5l4.3 4.5l-4.3 4.5" stroke="#f0c88f" stroke-width="1.15" fill="none"/><path d="M640.5 619.5l4.3 4.5l-4.3 4.5" stroke="#f0c88f" stroke-width="1.15" fill="none"/><path d="M647.5 619.5l4.3 4.5l-4.3 4.5" stroke="#f0c88f" stroke-width="1.15" fill="none"/><path d="M654.5 619.5l4.3 4.5l-4.3 4.5" stroke="#f0c88f" stroke-width="1.15" fill="none"/><path d="M640.5 634.5l4.3 4.5l-4.3 4.5" stroke="#f0c88f" stroke-width="1.15" fill="none"/><path d="M647.5 634.5l4.3 4.5l-4.3 4.5" stroke="#f0c88f" stroke-width="1.15" fill="none"/><path d="M654.5 634.5l4.3 4.5l-4.3 4.5" stroke="#f0c88f" stroke-width="1.15" fill="none"/><path d="M640.5 649.5l4.3 4.5l-4.3 4.5" stroke="#f0c88f" stroke-width="1.15" fill="none"/><path d="M647.5 649.5l4.3 4.5l-4.3 4.5" stroke="#f0c88f" stroke-width="1.15" fill="none"/><path d="M654.5 649.5l4.3 4.5l-4.3 4.5" stroke="#f0c88f" stroke-width="1.15" fill="none"/><path d="M640.5 664.5l4.3 4.5l-4.3 4.5" stroke="#f0c88f" stroke-width="1.15" fill="none"/><path d="M647.5 664.5l4.3 4.5l-4.3 4.5" stroke="#f0c88f" stroke-width="1.15" fill="none"/><path d="M654.5 664.5l4.3 4.5l-4.3 4.5" stroke="#f0c88f" stroke-width="1.15" fill="none"/><path d="M640.5 679.5l4.3 4.5l-4.3 4.5" stroke="#f0c88f" stroke-width="1.15" fill="none"/><path d="M647.5 679.5l4.3 4.5l-4.3 4.5" stroke="#f0c88f" stroke-width="1.15" fill="none"/><path d="M654.5 679.5l4.3 4.5l-4.3 4.5" stroke="#f0c88f" stroke-width="1.15" fill="none"/><path d="M640.5 694.5l4.3 4.5l-4.3 4.5" stroke="#f0c88f" stroke-width="1.15" fill="none"/><path d="M647.5 694.5l4.3 4.5l-4.3 4.5" stroke="#f0c88f" stroke-width="1.15" fill="none"/><path d="M654.5 694.5l4.3 4.5l-4.3 4.5" stroke="#f0c88f" stroke-width="1.15" fill="none"/><path d="M640.5 709.5l4.3 4.5l-4.3 4.5" stroke="#f0c88f" stroke-width="1.15" fill="none"/><path d="M647.5 709.5l4.3 4.5l-4.3 4.5" stroke="#f0c88f" stroke-width="1.15" fill="none"/><path d="M654.5 709.5l4.3 4.5l-4.3 4.5" stroke="#f0c88f" stroke-width="1.15" fill="none"/><path d="M640.5 724.5l4.3 4.5l-4.3 4.5" stroke="#f0c88f" stroke-width="1.15" fill="none"/><path d="M647.5 724.5l4.3 4.5l-4.3 4.5" stroke="#f0c88f" stroke-width="1.15" fill="none"/><path d="M654.5 724.5l4.3 4.5l-4.3 4.5" stroke="#f0c88f" stroke-width="1.15" fill="none"/><path d="M640.5 739.5l4.3 4.5l-4.3 4.5" stroke="#f0c88f" stroke-width="1.15" fill="none"/><path d="M647.5 739.5l4.3 4.5l-4.3 4.5" stroke="#f0c88f" stroke-width="1.15" fill="none"/><path d="M654.5 739.5l4.3 4.5l-4.3 4.5" stroke="#f0c88f" stroke-width="1.15" fill="none"/><path d="M640.5 754.5l4.3 4.5l-4.3 4.5" stroke="#f0c88f" stroke-width="1.15" fill="none"/><path d="M647.5 754.5l4.3 4.5l-4.3 4.5" stroke="#f0c88f" stroke-width="1.15" fill="none"/><path d="M654.5 754.5l4.3 4.5l-4.3 4.5" stroke="#f0c88f" stroke-width="1.15" fill="none"/><path d="M640.5 769.5l4.3 4.5l-4.3 4.5" stroke="#f0c88f" stroke-width="1.15" fill="none"/><path d="M647.5 769.5l4.3 4.5l-4.3 4.5" stroke="#f0c88f" stroke-width="1.15" fill="none"/><path d="M654.5 769.5l4.3 4.5l-4.3 4.5" stroke="#f0c88f" stroke-width="1.15" fill="none"/><path d="M640.5 784.5l4.3 4.5l-4.3 4.5" stroke="#f0c88f" stroke-width="1.15" fill="none"/><path d="M647.5 784.5l4.3 4.5l-4.3 4.5" stroke="#f0c88f" stroke-width="1.15" fill="none"/><path d="M654.5 784.5l4.3 4.5l-4.3 4.5" stroke="#f0c88f" stroke-width="1.15" fill="none"/><path d="M640.5 799.5l4.3 4.5l-4.3 4.5" stroke="#f0c88f" stroke-width="1.15" fill="none"/><path d="M647.5 799.5l4.3 4.5l-4.3 4.5" stroke="#f0c88f" stroke-width="1.15" fill="none"/><path d="M654.5 799.5l4.3 4.5l-4.3 4.5" stroke="#f0c88f" stroke-width="1.15" fill="none"/><path d="M640.5 814.5l4.3 4.5l-4.3 4.5" stroke="#f0c88f" stroke-width="1.15" fill="none"/><path d="M647.5 814.5l4.3 4.5l-4.3 4.5" stroke="#f0c88f" stroke-width="1.15" fill="none"/><path d="M654.5 814.5l4.3 4.5l-4.3 4.5" stroke="#f0c88f" stroke-width="1.15" fill="none"/><path d="M640.5 829.5l4.3 4.5l-4.3 4.5" stroke="#f0c88f" stroke-width="1.15" fill="none"/><path d="M647.5 829.5l4.3 4.5l-4.3 4.5" stroke="#f0c88f" stroke-width="1.15" fill="none"/><path d="M654.5 829.5l4.3 4.5l-4.3 4.5" stroke="#f0c88f" stroke-width="1.15" fill="none"/><path d="M640.5 844.5l4.3 4.5l-4.3 4.5" stroke="#f0c88f" stroke-width="1.15" fill="none"/><path d="M647.5 844.5l4.3 4.5l-4.3 4.5" stroke="#f0c88f" stroke-width="1.15" fill="none"/><path d="M654.5 844.5l4.3 4.5l-4.3 4.5" stroke="#f0c88f" stroke-width="1.15" fill="none"/><path d="M640.5 859.5l4.3 4.5l-4.3 4.5" stroke="#f0c88f" stroke-width="1.15" fill="none"/><path d="M647.5 859.5l4.3 4.5l-4.3 4.5" stroke="#f0c88f" stroke-width="1.15" fill="none"/><path d="M654.5 859.5l4.3 4.5l-4.3 4.5" stroke="#f0c88f" stroke-width="1.15" fill="none"/></svg>
<div id="tx">
<div class="t" style="left:286px;top:4px;color:#ecdfc0">emerge: (17 of 178) sys-libs/g...</div>
<div class="t" style="left:1007px;top:4px;color:#b5b53a">pl</div>
<div class="t" style="left:1059px;top:4px;color:#f0e6ca">100%</div>
<div class="t" style="left:1125px;top:4px;color:#f0e6ca">18%</div>
<div class="t" style="left:1184px;top:4px;color:#f0e6ca">80%</div>
<div class="t" style="left:1320px;top:4px;color:#f0e6ca">192.168.  .</div>
<div class="t" style="left:1470px;top:4px;color:#f0e6ca">100%</div>
<div class="t" style="left:1536px;top:4px;color:#bdbd2c">17:57</div>
<div class="t" style="left:5px;top:32px">    <span class="b" style="color:#dcc6a0">cpu    </span><span class="b" style="color:#ea6962">m</span><span class="b" style="color:#dcc6a0">enu  </span><span class="b" style="color:#ea6962">p</span><span class="b" style="color:#dcc6a0">reset                  17:57:24               BAT  100%     1000ms </span><span class="b" style="color:#ea6962">+</span></div>
<div class="t" style="left:5px;top:122px">                                                          <span class="b" style="color:#dcc6a0">i5-2520M             2.9 GHz</span></div>
<div class="t" style="left:5px;top:137px">                                                        <span class="b" style="color:#dcc6a0">CPU             </span><span style="color:#e4895c">81</span>%        98°C</div>
<div class="t" style="left:5px;top:152px">                                                        <span class="b" style="color:#dcc6a0">C0              </span><span style="color:#e0a05c">70</span>%        <span style="color:#ea6962">95</span>°C</div>
<div class="t" style="left:5px;top:167px">                                                        <span class="b" style="color:#dcc6a0">C1              </span><span style="color:#ea6962">93</span>%        <span style="color:#ea6962">95</span>°C</div>
<div class="t" style="left:5px;top:182px">                                                        <span class="b" style="color:#dcc6a0">C2              </span><span style="color:#e58a58">80</span>%        <span style="color:#ea6962">98</span>°C</div>
<div class="t" style="left:5px;top:197px">                                                        <span class="b" style="color:#dcc6a0">C3              </span><span style="color:#e39556">77</span>%        <span style="color:#ea6962">98</span>°C</div>
<div class="t" style="left:5px;top:212px">                                                        Load AVG:   3.72   3.71   3.13</div>
<div class="t" style="left:5px;top:287px">  <span style="color:#6e665d">up 03:38:37</span></div>
<div class="t" style="left:5px;top:317px">    <span class="b" style="color:#dcc6a0">mem                                        </span><span class="b" style="color:#ea6962">d</span><span class="b" style="color:#dcc6a0">isks                                </span><span style="color:#ea6962">i</span>o</div>
<div class="t" style="left:5px;top:332px">  <span class="b" style="color:#dcc6a0">Total:                           11.5 GiB  root                              99.9 GiB</span></div>
<div class="t" style="left:5px;top:347px">  Used:                            2.12 GiB   IO%</div>
<div class="t" style="left:5px;top:362px">   18%                                        Used: 41%                        40.6 GiB</div>
<div class="t" style="left:5px;top:377px">                                              Free: 59%                        59.3 GiB</div>
<div class="t" style="left:5px;top:407px">                                             <span class="b" style="color:#dcc6a0">swap                              15.9 GiB</span></div>
<div class="t" style="left:5px;top:422px">                                              Used:  0%                         524 KiB</div>
<div class="t" style="left:5px;top:437px">                                              Free:100%                        15.9 GiB</div>
<div class="t" style="left:5px;top:467px">  Available:                       9.44 GiB  <span class="b" style="color:#dcc6a0">home                              99.9 GiB</span></div>
<div class="t" style="left:5px;top:482px">   82%                                        IO%</div>
<div class="t" style="left:5px;top:497px">                                              Used: 41%                        40.6 GiB</div>
<div class="t" style="left:5px;top:512px">                                              Free: 59%                        59.3 GiB</div>
<div class="t" style="left:5px;top:542px">                                             <span class="b" style="color:#dcc6a0">.snapshots                        99.9 GiB</span></div>
<div class="t" style="left:5px;top:557px">                                              IO%</div>
<div class="t" style="left:5px;top:572px">                                              Used: 41%                        40.6 GiB</div>
<div class="t" style="left:5px;top:587px">  Cached:                          9.20 GiB   Free: 59%                        59.3 GiB</div>
<div class="t" style="left:5px;top:602px">   80%</div>
<div class="t" style="left:5px;top:617px">                                             <span class="b" style="color:#dcc6a0">efi                                510 MiB</span></div>
<div class="t" style="left:5px;top:632px">                                              IO%</div>
<div class="t" style="left:5px;top:647px">                                              Used:  6%                        32.2 MiB</div>
<div class="t" style="left:5px;top:662px">                                              Free: 94%                         478 MiB</div>
<div class="t" style="left:5px;top:692px">                                             <span class="b" style="color:#dcc6a0">tmp                               5.78 GiB</span></div>
<div class="t" style="left:5px;top:707px">  Free:                             339 MiB   Used:  0%                        76.0 KiB</div>
<div class="t" style="left:5px;top:722px">    3%                                        Free:100%                        5.78 GiB</div>
<div class="t" style="left:639px;top:32px">   <span style="color:#e6cea4">Unable to calculate Linux Kernel version for build, attempting to use running version</span></div>
<div class="t" style="left:639px;top:47px">   <span style="color:#e6cea4">Checking for suitable kernel configuration options ...                                                                        </span><span style="color:#7daea3">[ </span><span class="b" style="color:#a9b665">ok </span><span style="color:#7daea3">]</span></div>
<div class="t" style="left:639px;top:62px">    <span style="color:#e6cea4">Emerging (</span><span class="b" style="color:#e9a94f">1 </span><span style="color:#e6cea4">of </span><span class="b" style="color:#e9a94f">180</span><span style="color:#e6cea4">) </span><span style="color:#b8ba6e">dev-python/tomli-2.0.1-r1::gentoo</span></div>
<div class="t" style="left:639px;top:77px">    <span style="color:#e6cea4">Installing (</span><span class="b" style="color:#e9a94f">1 </span><span style="color:#e6cea4">of </span><span class="b" style="color:#e9a94f">180</span><span style="color:#e6cea4">) </span><span style="color:#b8ba6e">dev-python/tomli-2.0.1-r1::gentoo</span></div>
<div class="t" style="left:639px;top:92px">    <span style="color:#e6cea4">Emerging (</span><span class="b" style="color:#e9a94f">2 </span><span style="color:#e6cea4">of </span><span class="b" style="color:#e9a94f">180</span><span style="color:#e6cea4">) </span><span style="color:#b8ba6e">dev-util/re2c-2.1.1-r1::gentoo</span></div>
<div class="t" style="left:639px;top:107px">    <span class="b" style="color:#ea6962">Failed </span><span style="color:#e6cea4">to emerge </span><span style="color:#b8ba6e">dev-util/re2c-2.1.1-r1</span><span style="color:#e6cea4">, Log file:</span></div>
<div class="t" style="left:639px;top:122px">     <span style="color:#b8ba6e">'/var/tmp/portage/dev-util/re2c-2.1.1-r1/temp/build.log'</span></div>
<div class="t" style="left:639px;top:137px">    <span class="b" style="color:#a9b665">Resuming merge...</span></div>
<div class="t" style="left:639px;top:152px">    <span style="color:#e6cea4">Running pre-merge checks for </span><span style="color:#b8ba6e">sys-libs/glibc-2.35-r8</span></div>
<div class="t" style="left:639px;top:167px">    <span style="color:#e6cea4">Running pre-merge checks for </span><span style="color:#b8ba6e">dev-libs/libgcrypt-1.10.1-r2</span></div>
<div class="t" style="left:639px;top:182px">    <span style="color:#e6cea4">Running pre-merge checks for </span><span style="color:#b8ba6e">sys-devel/gcc-11.3.0</span></div>
<div class="t" style="left:639px;top:197px">    <span style="color:#e6cea4">Running pre-merge checks for </span><span style="color:#b8ba6e">app-crypt/libb2-0.98.1-r2</span></div>
<div class="t" style="left:639px;top:212px">    <span style="color:#e6cea4">Running pre-merge checks for </span><span style="color:#b8ba6e">sys-libs/libxcrypt-4.4.28-r1</span></div>
<div class="t" style="left:639px;top:227px">    <span style="color:#e6cea4">Running pre-merge checks for </span><span style="color:#b8ba6e">dev-lang/python-3.11.0_p2</span></div>
<div class="t" style="left:639px;top:242px">    <span style="color:#e6cea4">Running pre-merge checks for </span><span style="color:#b8ba6e">net-misc/openssh-9.0_p1-r6</span></div>
<div class="t" style="left:639px;top:257px">    <span style="color:#e6cea4">Running pre-merge checks for </span><span style="color:#b8ba6e">sys-apps/portage-3.0.38.1-r2</span></div>
<div class="t" style="left:639px;top:272px">   <span style="color:#e6cea4">Determining the location of the kernel source code</span></div>
<div class="t" style="left:639px;top:287px">   <span style="color:#e6cea4">Unable to find kernel sources at /usr/src/linux</span></div>
<div class="t" style="left:639px;top:302px">   <span style="color:#e6cea4">Please make sure that /usr/src/linux points at your running kernel,</span></div>
<div class="t" style="left:639px;top:317px">   <span style="color:#e6cea4">(or the kernel you wish to build against).</span></div>
<div class="t" style="left:639px;top:332px">   <span style="color:#e6cea4">Alternatively, set the KERNEL_DIR environment variable to the kernel sources location</span></div>
<div class="t" style="left:639px;top:347px">   <span style="color:#e6cea4">Unable to calculate Linux Kernel version for build, attempting to use running version</span></div>
<div class="t" style="left:639px;top:362px">   <span style="color:#e6cea4">Checking for suitable kernel configuration options ...                                                                        </span><span style="color:#7daea3">[ </span><span class="b" style="color:#a9b665">ok </span><span style="color:#7daea3">]</span></div>
<div class="t" style="left:639px;top:377px">    <span style="color:#e6cea4">Emerging (</span><span class="b" style="color:#e9a94f">1 </span><span style="color:#e6cea4">of </span><span class="b" style="color:#e9a94f">178</span><span style="color:#e6cea4">) </span><span style="color:#b8ba6e">dev-python/installer-0.5.1-r1::gentoo</span></div>
<div class="t" style="left:639px;top:392px">    <span style="color:#e6cea4">Installing (</span><span class="b" style="color:#e9a94f">1 </span><span style="color:#e6cea4">of </span><span class="b" style="color:#e9a94f">178</span><span style="color:#e6cea4">) </span><span style="color:#b8ba6e">dev-python/installer-0.5.1-r1::gentoo</span></div>
<div class="t" style="left:639px;top:407px">    <span style="color:#e6cea4">Emerging (</span><span class="b" style="color:#e9a94f">2 </span><span style="color:#e6cea4">of </span><span class="b" style="color:#e9a94f">178</span><span style="color:#e6cea4">) </span><span style="color:#b8ba6e">dev-python/gpep517-9::gentoo</span></div>
<div class="t" style="left:639px;top:422px">    <span style="color:#e6cea4">Installing (</span><span class="b" style="color:#e9a94f">2 </span><span style="color:#e6cea4">of </span><span class="b" style="color:#e9a94f">178</span><span style="color:#e6cea4">) </span><span style="color:#b8ba6e">dev-python/gpep517-9::gentoo</span></div>
<div class="t" style="left:639px;top:437px">    <span style="color:#e6cea4">Emerging (</span><span class="b" style="color:#e9a94f">3 </span><span style="color:#e6cea4">of </span><span class="b" style="color:#e9a94f">178</span><span style="color:#e6cea4">) </span><span style="color:#b8ba6e">dev-python/flit_core-3.7.1::gentoo</span></div>
<div class="t" style="left:639px;top:452px">    <span style="color:#e6cea4">Installing (</span><span class="b" style="color:#e9a94f">3 </span><span style="color:#e6cea4">of </span><span class="b" style="color:#e9a94f">178</span><span style="color:#e6cea4">) </span><span style="color:#b8ba6e">dev-python/flit_core-3.7.1::gentoo</span></div>
<div class="t" style="left:639px;top:467px">    <span style="color:#e6cea4">Emerging (</span><span class="b" style="color:#e9a94f">4 </span><span style="color:#e6cea4">of </span><span class="b" style="color:#e9a94f">178</span><span style="color:#e6cea4">) </span><span style="color:#b8ba6e">dev-python/more-itertools-8.14.0::gentoo</span></div>
<div class="t" style="left:639px;top:482px">    <span style="color:#e6cea4">Installing (</span><span class="b" style="color:#e9a94f">4 </span><span style="color:#e6cea4">of </span><span class="b" style="color:#e9a94f">178</span><span style="color:#e6cea4">) </span><span style="color:#b8ba6e">dev-python/more-itertools-8.14.0::gentoo</span></div>
<div class="t" style="left:639px;top:497px">    <span style="color:#e6cea4">Emerging (</span><span class="b" style="color:#e9a94f">5 </span><span style="color:#e6cea4">of </span><span class="b" style="color:#e9a94f">178</span><span style="color:#e6cea4">) </span><span style="color:#b8ba6e">dev-python/jaraco-context-4.1.2::gentoo</span></div>
<div class="t" style="left:639px;top:512px">    <span style="color:#e6cea4">Installing (</span><span class="b" style="color:#e9a94f">5 </span><span style="color:#e6cea4">of </span><span class="b" style="color:#e9a94f">178</span><span style="color:#e6cea4">) </span><span style="color:#b8ba6e">dev-python/jaraco-context-4.1.2::gentoo</span></div>
<div class="t" style="left:639px;top:527px">    <span style="color:#e6cea4">Emerging (</span><span class="b" style="color:#e9a94f">6 </span><span style="color:#e6cea4">of </span><span class="b" style="color:#e9a94f">178</span><span style="color:#e6cea4">) </span><span style="color:#b8ba6e">dev-python/appdirs-1.4.4-r2::gentoo</span></div>
<div class="t" style="left:639px;top:542px">    <span style="color:#e6cea4">Installing (</span><span class="b" style="color:#e9a94f">6 </span><span style="color:#e6cea4">of </span><span class="b" style="color:#e9a94f">178</span><span style="color:#e6cea4">) </span><span style="color:#b8ba6e">dev-python/appdirs-1.4.4-r2::gentoo</span></div>
<div class="t" style="left:639px;top:557px">    <span style="color:#e6cea4">Emerging (</span><span class="b" style="color:#e9a94f">7 </span><span style="color:#e6cea4">of </span><span class="b" style="color:#e9a94f">178</span><span style="color:#e6cea4">) </span><span style="color:#b8ba6e">dev-python/ordered-set-4.1.0::gentoo</span></div>
<div class="t" style="left:639px;top:572px">    <span style="color:#e6cea4">Installing (</span><span class="b" style="color:#e9a94f">7 </span><span style="color:#e6cea4">of </span><span class="b" style="color:#e9a94f">178</span><span style="color:#e6cea4">) </span><span style="color:#b8ba6e">dev-python/ordered-set-4.1.0::gentoo</span></div>
<div class="t" style="left:639px;top:587px">    <span style="color:#e6cea4">Emerging (</span><span class="b" style="color:#e9a94f">8 </span><span style="color:#e6cea4">of </span><span class="b" style="color:#e9a94f">178</span><span style="color:#e6cea4">) </span><span style="color:#b8ba6e">dev-python/pyparsing-3.0.9::gentoo</span></div>
<div class="t" style="left:639px;top:602px">    <span style="color:#e6cea4">Installing (</span><span class="b" style="color:#e9a94f">8 </span><span style="color:#e6cea4">of </span><span class="b" style="color:#e9a94f">178</span><span style="color:#e6cea4">) </span><span style="color:#b8ba6e">dev-python/pyparsing-3.0.9::gentoo</span></div>
<div class="t" style="left:639px;top:617px">    <span style="color:#e6cea4">Emerging (</span><span class="b" style="color:#e9a94f">9 </span><span style="color:#e6cea4">of </span><span class="b" style="color:#e9a94f">178</span><span style="color:#e6cea4">) </span><span style="color:#b8ba6e">dev-python/packaging-21.3-r2::gentoo</span></div>
<div class="t" style="left:639px;top:632px">    <span style="color:#e6cea4">Installing (</span><span class="b" style="color:#e9a94f">9 </span><span style="color:#e6cea4">of </span><span class="b" style="color:#e9a94f">178</span><span style="color:#e6cea4">) </span><span style="color:#b8ba6e">dev-python/packaging-21.3-r2::gentoo</span></div>
<div class="t" style="left:639px;top:647px">    <span style="color:#e6cea4">Emerging (</span><span class="b" style="color:#e9a94f">10 </span><span style="color:#e6cea4">of </span><span class="b" style="color:#e9a94f">178</span><span style="color:#e6cea4">) </span><span style="color:#b8ba6e">dev-python/jaraco-functools-3.5.2::gentoo</span></div>
<div class="t" style="left:639px;top:662px">    <span style="color:#e6cea4">Installing (</span><span class="b" style="color:#e9a94f">10 </span><span style="color:#e6cea4">of </span><span class="b" style="color:#e9a94f">178</span><span style="color:#e6cea4">) </span><span style="color:#b8ba6e">dev-python/jaraco-functools-3.5.2::gentoo</span></div>
<div class="t" style="left:639px;top:677px">    <span style="color:#e6cea4">Emerging (</span><span class="b" style="color:#e9a94f">11 </span><span style="color:#e6cea4">of </span><span class="b" style="color:#e9a94f">178</span><span style="color:#e6cea4">) </span><span style="color:#b8ba6e">dev-python/jaraco-text-3.9.1::gentoo</span></div>
<div class="t" style="left:639px;top:692px">    <span style="color:#e6cea4">Installing (</span><span class="b" style="color:#e9a94f">11 </span><span style="color:#e6cea4">of </span><span class="b" style="color:#e9a94f">178</span><span style="color:#e6cea4">) </span><span style="color:#b8ba6e">dev-python/jaraco-text-3.9.1::gentoo</span></div>
<div class="t" style="left:639px;top:707px">    <span style="color:#e6cea4">Emerging (</span><span class="b" style="color:#e9a94f">12 </span><span style="color:#e6cea4">of </span><span class="b" style="color:#e9a94f">178</span><span style="color:#e6cea4">) </span><span style="color:#b8ba6e">dev-python/nspektr-0.4.0::gentoo</span></div>
<div class="t" style="left:639px;top:722px">    <span style="color:#e6cea4">Installing (</span><span class="b" style="color:#e9a94f">12 </span><span style="color:#e6cea4">of </span><span class="b" style="color:#e9a94f">178</span><span style="color:#e6cea4">) </span><span style="color:#b8ba6e">dev-python/nspektr-0.4.0::gentoo</span></div>
<div class="t" style="left:639px;top:737px">    <span style="color:#e6cea4">Emerging (</span><span class="b" style="color:#e9a94f">13 </span><span style="color:#e6cea4">of </span><span class="b" style="color:#e9a94f">178</span><span style="color:#e6cea4">) </span><span style="color:#b8ba6e">dev-python/wheel-0.37.1-r1::gentoo</span></div>
<div class="t" style="left:639px;top:752px">    <span style="color:#e6cea4">Installing (</span><span class="b" style="color:#e9a94f">13 </span><span style="color:#e6cea4">of </span><span class="b" style="color:#e9a94f">178</span><span style="color:#e6cea4">) </span><span style="color:#b8ba6e">dev-python/wheel-0.37.1-r1::gentoo</span></div>
<div class="t" style="left:639px;top:767px">    <span style="color:#e6cea4">Emerging (</span><span class="b" style="color:#e9a94f">14 </span><span style="color:#e6cea4">of </span><span class="b" style="color:#e9a94f">178</span><span style="color:#e6cea4">) </span><span style="color:#b8ba6e">dev-util/meson-0.63.2-r1::gentoo</span></div>
<div class="t" style="left:639px;top:782px">    <span style="color:#e6cea4">Installing (</span><span class="b" style="color:#e9a94f">14 </span><span style="color:#e6cea4">of </span><span class="b" style="color:#e9a94f">178</span><span style="color:#e6cea4">) </span><span style="color:#b8ba6e">dev-util/meson-0.63.2-r1::gentoo</span></div>
<div class="t" style="left:639px;top:797px">    <span style="color:#e6cea4">Emerging (</span><span class="b" style="color:#e9a94f">15 </span><span style="color:#e6cea4">of </span><span class="b" style="color:#e9a94f">178</span><span style="color:#e6cea4">) </span><span style="color:#b8ba6e">dev-python/markupsafe-2.1.1::gentoo</span></div>
<div class="t" style="left:639px;top:812px">    <span style="color:#e6cea4">Installing (</span><span class="b" style="color:#e9a94f">15 </span><span style="color:#e6cea4">of </span><span class="b" style="color:#e9a94f">178</span><span style="color:#e6cea4">) </span><span style="color:#b8ba6e">dev-python/markupsafe-2.1.1::gentoo</span></div>
<div class="t" style="left:639px;top:827px">    <span style="color:#e6cea4">Emerging (</span><span class="b" style="color:#e9a94f">16 </span><span style="color:#e6cea4">of </span><span class="b" style="color:#e9a94f">178</span><span style="color:#e6cea4">) </span><span style="color:#b8ba6e">dev-python/jinja-3.1.2::gentoo</span></div>
<div class="t" style="left:639px;top:842px">    <span style="color:#e6cea4">Installing (</span><span class="b" style="color:#e9a94f">16 </span><span style="color:#e6cea4">of </span><span class="b" style="color:#e9a94f">178</span><span style="color:#e6cea4">) </span><span style="color:#b8ba6e">dev-python/jinja-3.1.2::gentoo</span></div>
<div class="t" style="left:639px;top:857px">    <span style="color:#e6cea4">Emerging (</span><span class="b" style="color:#e9a94f">17 </span><span style="color:#e6cea4">of </span><span class="b" style="color:#e9a94f">178</span><span style="color:#e6cea4">) </span><span style="color:#b8ba6e">sys-libs/glibc-2.35-r8::gentoo</span></div>
<div class="t" style="left:639px;top:872px"><span style="color:#f0c88f">9</span></div>
<div class="t b" style="left:28px;top:32px;font-size:10px;line-height:10px;letter-spacing:0;color:#ea6962">1</div>
<div class="t b" style="left:28px;top:317px;font-size:10px;line-height:10px;letter-spacing:0;color:#ea6962">2</div>
</div>
<div class="w" style="left:646px;top:885px;width:7px;height:1px;background:#f0c88f"></div>
</body></html>
